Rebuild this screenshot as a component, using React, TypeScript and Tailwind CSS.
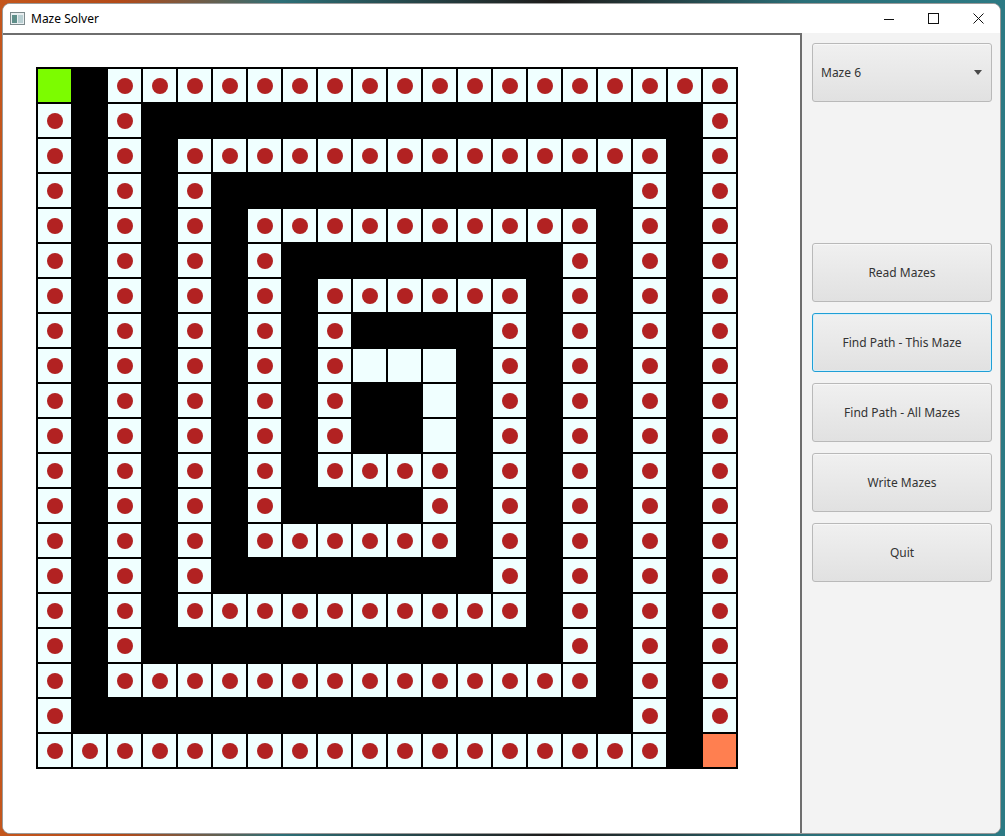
const MAZE = [
  "S#oooooooooooooooooo",
  "o#o################o",
  "o#o#oooooooooooooo#o",
  "o#o#o############o#o",
  "o#o#o#oooooooooo#o#o",
  "o#o#o#o########o#o#o",
  "o#o#o#o#oooooo#o#o#o",
  "o#o#o#o#o####o#o#o#o",
  "o#o#o#o#o...#o#o#o#o",
  "o#o#o#o#o##.#o#o#o#o",
  "o#o#o#o#o##.#o#o#o#o",
  "o#o#o#o#oooo#o#o#o#o",
  "o#o#o#o####o#o#o#o#o",
  "o#o#o#oooooo#o#o#o#o",
  "o#o#o########o#o#o#o",
  "o#o#oooooooooo#o#o#o",
  "o#o############o#o#o",
  "o#oooooooooooooo#o#o",
  "o################o#o",
  "oooooooooooooooooo#E",
];

function Cell({ kind }: { kind: string }) {
  if (kind === "#") return <div className="h-[33px] w-[33px] bg-black" />;
  if (kind === "S") return <div className="h-[33px] w-[33px] bg-[#7cfc00]" />;
  if (kind === "E") return <div className="h-[33px] w-[33px] bg-[#ff7f50]" />;
  return (
    <div className="flex h-[33px] w-[33px] items-center justify-center bg-[#f0ffff]">
      {kind === "o" && <div className="h-[16px] w-[16px] rounded-full bg-[#b22222]" />}
    </div>
  );
}

function SideButton({ label, focused }: { label: string; focused?: boolean }) {
  return (
    <button
      className={
        "h-[59px] w-[180px] rounded-[3px] border bg-[linear-gradient(#f0f0f0,#e1e1e1)] text-[12px] text-[#333333] " +
        (focused
          ? "border-[#1f9fd6] shadow-[inset_0_0_0_1px_#d6eef8]"
          : "border-[#b9b9b9] shadow-[inset_0_1px_0_#f8f8f8]")
      }
    >
      {label}
    </button>
  );
}

export default function App() {
  return (
    <div className="h-[836px] w-[1005px] overflow-hidden bg-[linear-gradient(90deg,#c4561c_0%,#b34a18_12%,#2c6f77_28%,#1e1b1a_55%,#2a6f78_80%,#2c7a84_100%)] pl-[2px] pt-[3px] font-['Noto_Sans','Open_Sans',sans-serif]">
      <div className="flex h-[831px] w-[999px] flex-col overflow-hidden rounded-lg border border-[#9a9a9a] bg-white">
        {/* title bar */}
        <div className="flex h-[29px] shrink-0 items-center bg-white">
          <svg width="15" height="13" viewBox="0 0 15 13" className="ml-[7px]">
            <rect x="0.5" y="0.5" width="14" height="12" fill="#e8eef0" stroke="#7c8a8c" />
            <rect x="2" y="3" width="5" height="8" fill="#5f8f8a" />
            <rect x="8" y="3" width="5" height="8" fill="#b9cfd2" />
          </svg>
          <span className="ml-[6px] text-[12px] text-black">Maze Solver</span>
          <div className="ml-auto flex items-center">
            <div className="flex h-[29px] w-[45px] items-center justify-center">
              <svg width="10" height="10" viewBox="0 0 10 10">
                <line x1="0" y1="5.5" x2="10" y2="5.5" stroke="#111" strokeWidth="1" />
              </svg>
            </div>
            <div className="flex h-[29px] w-[45px] items-center justify-center">
              <svg width="11" height="11" viewBox="0 0 11 11">
                <rect x="0.5" y="0.5" width="10" height="10" fill="none" stroke="#111" strokeWidth="1" />
              </svg>
            </div>
            <div className="flex h-[29px] w-[44px] items-center justify-center">
              <svg width="11" height="11" viewBox="0 0 11 11">
                <path d="M0.5 0.5 L10.5 10.5 M10.5 0.5 L0.5 10.5" stroke="#111" strokeWidth="1" />
              </svg>
            </div>
          </div>
        </div>

        {/* body */}
        <div className="flex flex-1">
          <div className="w-[799px] border-r-2 border-t-2 border-[#6e6e6e] bg-white pl-[33px] pt-[32px]">
            <div className="grid w-fit grid-cols-[repeat(20,33px)] gap-[2px] bg-black p-[2px]">
              {MAZE.flatMap((row, r) =>
                row.split("").map((kind, c) => <Cell key={r + "-" + c} kind={kind} />)
              )}
            </div>
          </div>

          <div className="flex flex-1 flex-col bg-[#f3f3f3] pl-[10px] pt-[10px]">
            <div className="flex h-[59px] w-[180px] items-center justify-between rounded-[3px] border border-[#b9b9b9] bg-[linear-gradient(#f0f0f0,#e1e1e1)] pl-[8px] pr-[9px] shadow-[inset_0_1px_0_#f8f8f8]">
              <span className="text-[12px] text-[#333333]">Maze 6</span>
              <svg width="8" height="5" viewBox="0 0 8 5">
                <path d="M0 0 L8 0 L4 5 Z" fill="#4a4a4a" />
              </svg>
            </div>
            <div className="mt-[141px] flex flex-col gap-[11px]">
              <SideButton label="Read Mazes" />
              <SideButton label="Find Path - This Maze" focused />
              <SideButton label="Find Path - All Mazes" />
              <SideButton label="Write Mazes" />
              <SideButton label="Quit" />
            </div>
          </div>
        </div>
      </div>
    </div>
  );
}
